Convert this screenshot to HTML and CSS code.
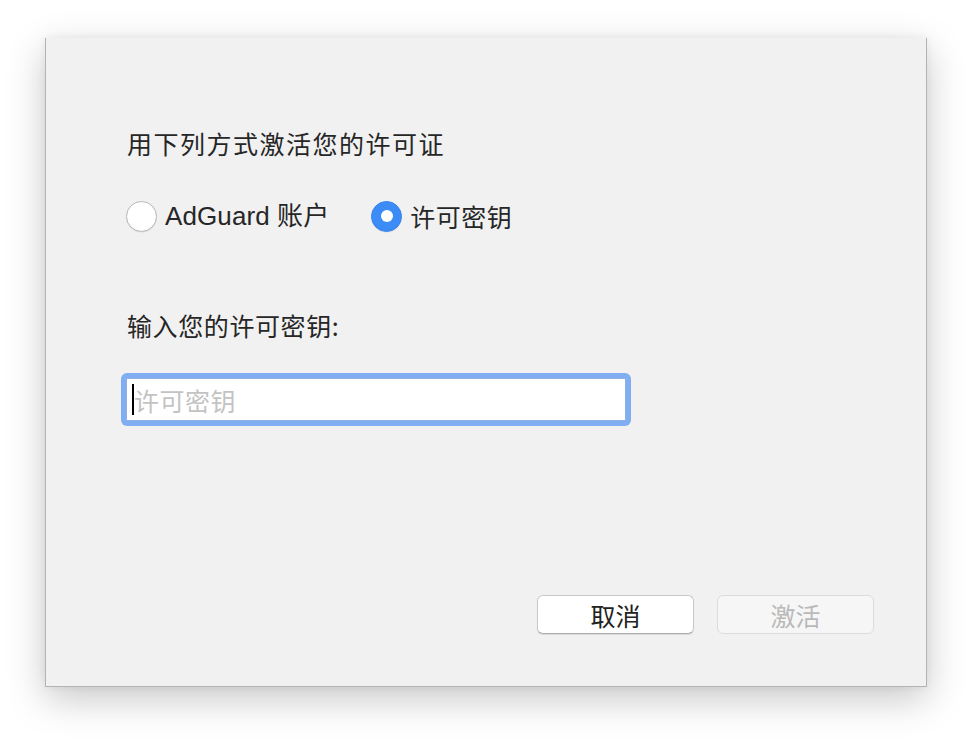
FILE: index.html
```html
<!DOCTYPE html>
<html lang="zh-CN">
<head>
<meta charset="utf-8">
<title>激活许可证</title>
<link rel="stylesheet" href="styles.css">
</head>
<body>
<div class="stage">
  <div class="sheet">
    <div class="title">用下列方式激活您的许可证</div>
    <div class="radios">
      <label class="radio">
        <span class="circle"></span>
        <span class="label">AdGuard 账户</span>
      </label>
      <label class="radio checked">
        <span class="circle"><span class="dot"></span></span>
        <span class="label">许可密钥</span>
      </label>
    </div>
    <div class="prompt">输入您的许可密钥:</div>
    <div class="field-ring">
      <div class="field">
        <span class="caret"></span>
        <span class="placeholder">许可密钥</span>
      </div>
    </div>
    <div class="buttons">
      <div class="btn primary">取消</div>
      <div class="btn disabled">激活</div>
    </div>
  </div>
</div>
</body>
</html>
```

FILE: styles.css
```css
html, body {
  margin: 0;
  padding: 0;
  background: #ffffff;
}

body {
  font-family: "Liberation Sans", "Noto Sans CJK SC", sans-serif;
  color: #262626;
}

.stage {
  padding: 38px 0 0 45px;
  height: 740px;
  box-sizing: border-box;
  overflow: hidden;
}

.sheet {
  width: 882px;
  height: 649px;
  box-sizing: border-box;
  background: #f1f1f1;
  border: 1px solid #b3b3b3;
  border-top: none;
  box-shadow: 0 12px 36px rgba(0, 0, 0, 0.22), 0 0 8px rgba(0, 0, 0, 0.06);
  display: flex;
  flex-direction: column;
  padding: 0 52px 52px 81px;
}

.title {
  font-family: "Noto Sans CJK SC", sans-serif;
  font-size: 25px;
  letter-spacing: 1.5px;
  line-height: 36px;
  margin-top: 87px;
}

.radios {
  display: flex;
  align-items: center;
  margin-top: 37px;
  margin-left: -1px;
  gap: 42px;
}

.radio {
  display: flex;
  align-items: center;
  gap: 8px;
}

.circle {
  width: 31px;
  height: 31px;
  border-radius: 50%;
  box-sizing: border-box;
  background: #ffffff;
  border: 1px solid #b9b9b9;
  box-shadow: inset 0 -1px 1px rgba(0,0,0,0.03), 0 0.5px 1px rgba(0,0,0,0.08);
  display: flex;
  align-items: center;
  justify-content: center;
}

.radio.checked .circle {
  background: #3b8cf7;
  border-color: #3986f0;
}

.dot {
  width: 12px;
  height: 12px;
  border-radius: 50%;
  background: #ffffff;
}

.label {
  font-size: 26px;
  line-height: 36px;
  letter-spacing: 0.1px;
}

.radio.checked .label {
  font-family: "Noto Sans CJK SC", sans-serif;
  font-size: 25px;
  letter-spacing: 0.5px;
}

.prompt {
  font-family: "Noto Sans CJK SC", sans-serif;
  font-size: 25px;
  letter-spacing: 0.6px;
  line-height: 36px;
  margin-top: 73px;
}

.field-ring {
  margin-top: 30px;
  margin-left: -6px;
  width: 510px;
  height: 53px;
  box-sizing: border-box;
  border-radius: 6px;
  background: #80aef2;
  padding: 5px;
}

.field {
  height: 100%;
  box-sizing: border-box;
  background: #ffffff;
  border: 1px solid #8fb0e2;
  display: flex;
  align-items: center;
  padding-left: 5px;
}

.caret {
  width: 2px;
  height: 31px;
  background: #000000;
}

.placeholder {
  font-family: "Noto Sans CJK SC", sans-serif;
  font-size: 25px;
  color: #c3c3c3;
  letter-spacing: 0.5px;
}

.buttons {
  margin-top: auto;
  display: flex;
  justify-content: flex-end;
  gap: 23px;
}

.btn {
  width: 157px;
  height: 39px;
  box-sizing: border-box;
  border-radius: 6px;
  display: flex;
  align-items: center;
  justify-content: center;
  font-family: "Noto Sans CJK SC", sans-serif;
  font-size: 25px;
}

.btn.primary {
  background: #ffffff;
  color: #222222;
  border: 1px solid #c8c8c8;
  border-bottom-color: #adadad;
  box-shadow: 0 1px 1px rgba(0, 0, 0, 0.1);
}

.btn.disabled {
  background: #f6f6f6;
  color: #b9b9b9;
  border: 1px solid #dcdcdc;
}
```
